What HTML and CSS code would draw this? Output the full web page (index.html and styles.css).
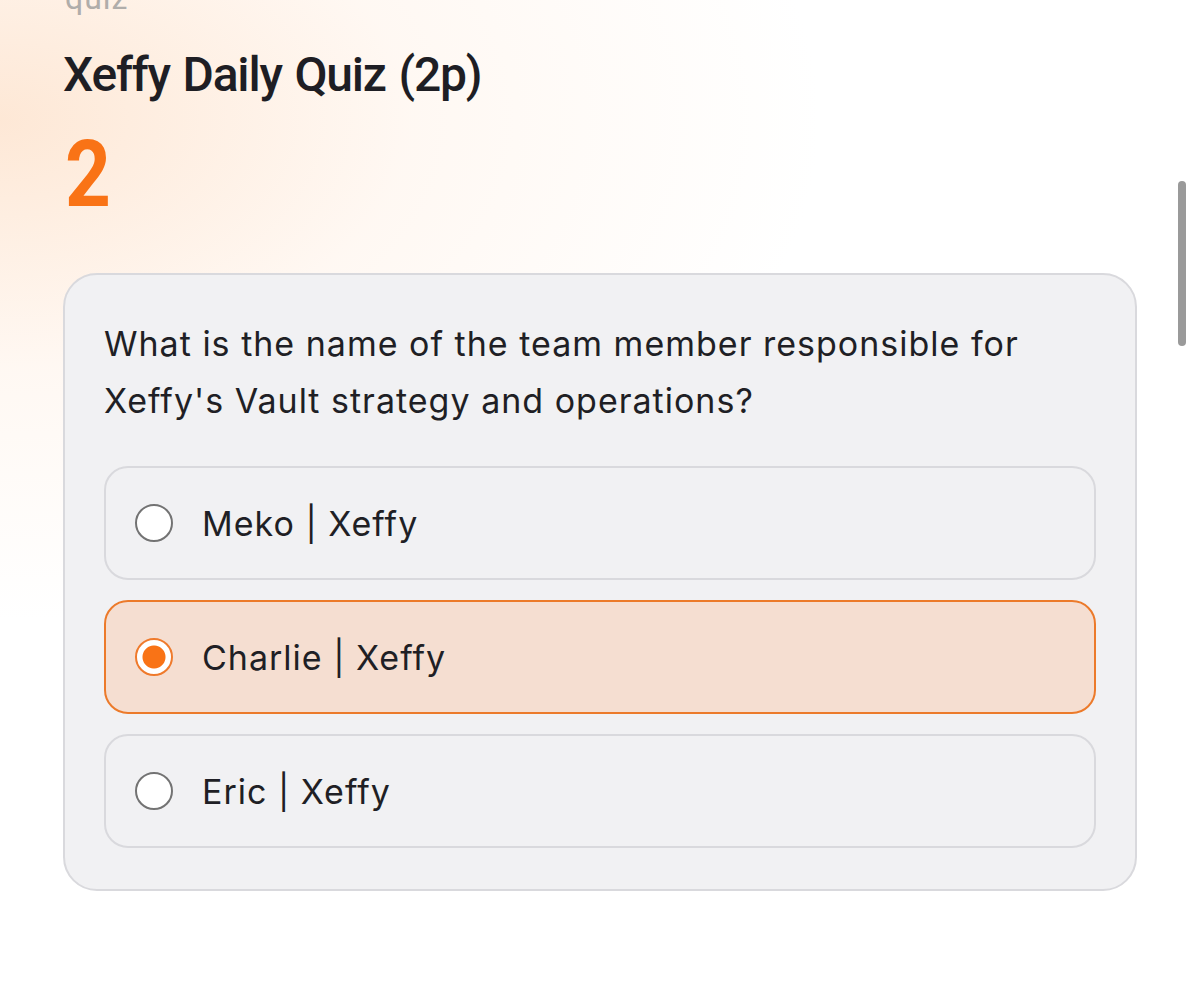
FILE: index.html
```html
<!DOCTYPE html>
<html>
<head>
<meta charset="utf-8">
<link rel="stylesheet" href="styles.css">
</head>
<body>
<div class="page">
  <div class="eyebrow">quiz</div>
  <h1 class="title">Xeffy Daily Quiz (2p)</h1>
  <div class="number"><span class="digit">2</span></div>
  <div class="card">
    <p class="question">What is the name of the team member responsible for Xeffy's Vault strategy and operations?</p>
    <div class="options">
      <div class="option"><span class="radio"></span><span class="label">Meko | Xeffy</span></div>
      <div class="option selected"><span class="radio"></span><span class="label">Charlie | Xeffy</span></div>
      <div class="option"><span class="radio"></span><span class="label">Eric | Xeffy</span></div>
    </div>
  </div>
</div>
<div class="scrollbar"></div>
</body>
</html>
```
FILE: styles.css
```css
html, body {
  margin: 0;
  height: 100%;
  overflow: hidden;
}
body {
  background:
    radial-gradient(ellipse 820px 500px at 0px 120px, rgba(253, 224, 200, 0.75), rgba(255, 240, 228, 0.45) 50%, rgba(255, 255, 255, 0) 100%),
    #ffffff;
  font-family: Inter, "Noto Sans", sans-serif;
  color: #1c1c22;
}
.page {
  padding: 0 63px;
  width: 1074px;
}
.eyebrow {
  font-family: Roboto, "DejaVu Sans Condensed", sans-serif;
  font-size: 32px;
  color: #b0adaa;
  line-height: 28px;
  margin-top: -16px;
  padding-left: 2px;
  letter-spacing: 1px;
}
.title {
  font-family: Roboto, "DejaVu Sans Condensed", sans-serif;
  font-weight: 500;
  font-size: 48px;
  line-height: 56px;
  margin: 35px 0 0 0;
  color: #1e1e24;
  letter-spacing: -1.2px;
  word-spacing: 2px;
}
.number {
  font-family: Roboto, "DejaVu Sans Condensed", sans-serif;
  font-weight: 700;
  font-size: 93px;
  line-height: 100px;
  color: #f97316;
  margin: 22px 0 0 2px;
}
.digit {
  display: inline-block;
  transform: scaleX(0.86);
  transform-origin: left center;
}
.card {
  margin-top: 48px;
  background: #f1f1f3;
  border: 2px solid #d9d9dd;
  border-radius: 34px;
  padding: 40px 39px 41px 39px;
}
.question {
  margin: 0 0 37px 0;
  font-size: 34px;
  line-height: 57px;
  letter-spacing: 1px;
  color: #1f1f25;
}
.options {
  display: flex;
  flex-direction: column;
  gap: 20px;
}
.option {
  height: 110px;
  border: 2px solid #d9d9dd;
  border-radius: 24px;
  background: #f1f1f3;
  display: flex;
  align-items: center;
  padding-left: 29px;
  gap: 29px;
  font-size: 34px;
  letter-spacing: 1px;
  color: #1f1f25;
}
.option.selected {
  background: #f5ded1;
  border-color: #ec7a2a;
}
.radio {
  width: 34px;
  height: 34px;
  border: 2px solid #737373;
  border-radius: 50%;
  background: #ffffff;
  flex: none;
}
.option.selected .radio {
  border-color: #ef7a2c;
  background: radial-gradient(circle, #f97316 0 11px, #ffffff 12px);
}
.scrollbar {
  position: fixed;
  left: 1178px;
  top: 181px;
  width: 8px;
  height: 165px;
  border-radius: 4px;
  background: #9a9a9a;
}
```
